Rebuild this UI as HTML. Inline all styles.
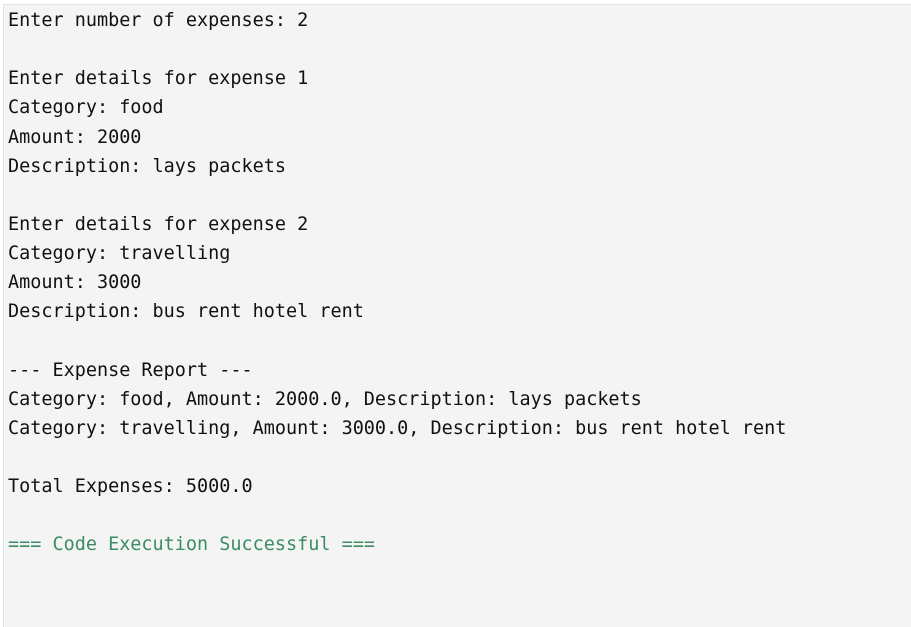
<!DOCTYPE html>
<html><head><style>
html,body{margin:0;padding:0;background:#fff;}
.box{position:absolute;left:3px;top:4px;width:908px;height:622px;background:#f4f4f4;border-top:1px solid #dde3ea;border-left:1px solid #dde3ea;}
pre{margin:0;padding:1px 0 0 4px;font-family:"DejaVu Sans Mono","Liberation Mono",monospace;font-size:18.48px;line-height:29.12px;color:#111;}
.g{color:#3c8c64;}
</style></head><body><div class="box"><pre>Enter number of expenses: 2

Enter details for expense 1
Category: food
Amount: 2000
Description: lays packets

Enter details for expense 2
Category: travelling
Amount: 3000
Description: bus rent hotel rent

--- Expense Report ---
Category: food, Amount: 2000.0, Description: lays packets
Category: travelling, Amount: 3000.0, Description: bus rent hotel rent

Total Expenses: 5000.0

<span class="g">=== Code Execution Successful ===</span></pre></div></body></html>
